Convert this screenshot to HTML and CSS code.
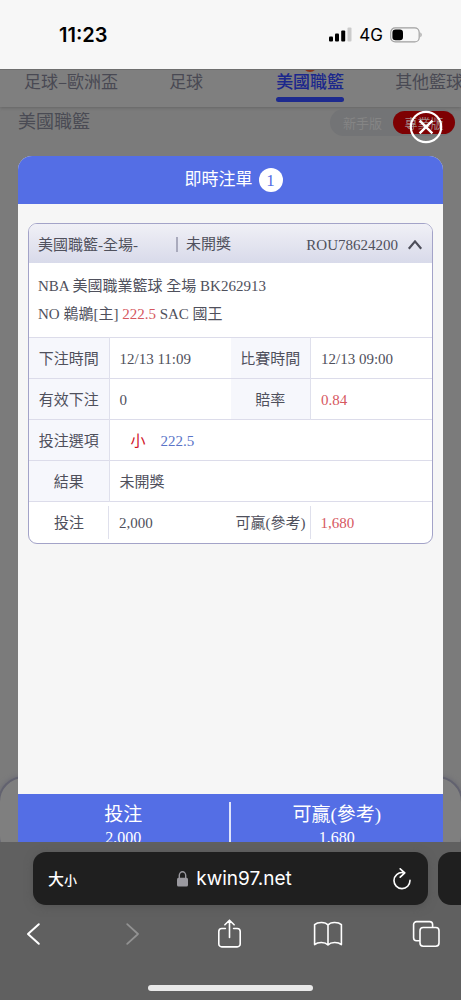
FILE: index.html
```html
<!DOCTYPE html>
<html lang="zh-Hant">
<head>
<meta charset="utf-8">
<meta name="viewport" content="width=device-width, initial-scale=1">
<title>即時注單</title>
<link rel="stylesheet" href="styles.css">
</head>
<body>
<header class="status">
  <span class="status-time">11:23</span>
  <div class="status-right">
    <svg class="signal" width="23" height="15" viewBox="0 0 23 15" aria-hidden="true">
      <rect x="0" y="9.5" width="4" height="5" rx="1"/>
      <rect x="6" y="6.5" width="4" height="8" rx="1"/>
      <rect x="12.2" y="3.5" width="4" height="11" rx="1"/>
      <rect x="18.5" y="0.5" width="4" height="14" rx="1" fill="#cbcbcb"/>
    </svg>
    <span class="status-net">4G</span>
    <svg width="33" height="16" viewBox="0 0 33 16" aria-hidden="true">
      <rect x="0.7" y="0.9" width="28.5" height="14" rx="4.5" fill="none" stroke="#a0a0a0" stroke-width="1.2"/>
      <rect x="2.4" y="2.6" width="10.6" height="10.6" rx="3.2"/>
      <path d="M30.4 5.6c1.7.7 1.7 4 0 4.7z" fill="#a0a0a0"/>
    </svg>
  </div>
</header>

<main class="page">
  <nav class="tabs">
    <button class="tab">足球–歐洲盃</button>
    <button class="tab">足球</button>
    <button class="tab tab-active">美國職籃<span class="tab-dot"></span></button>
    <button class="tab">其他籃球</button>
  </nav>
  <div class="league">
    <span class="league-name">美國職籃</span>
    <div class="mode">
      <button class="mode-item">新手版</button>
      <button class="mode-item mode-on">專業版</button>
    </div>
  </div>
  <div class="sheet"></div>

  <button class="close" aria-label="關閉">
    <svg width="34" height="34" viewBox="0 0 34 34" aria-hidden="true">
      <circle cx="17" cy="17" r="15.2" fill="none" stroke="#fff" stroke-width="2.2"/>
      <path d="M10.6 10.6l12.8 12.8M23.4 10.6L10.6 23.4" stroke="#fff" stroke-width="2.4"/>
    </svg>
  </button>

  <section class="modal">
    <h1 class="modal-head">即時注單<span class="count">1</span></h1>
    <div class="modal-body">
      <article class="card">
        <div class="card-head">
          <span class="card-title">美國職籃-全場-</span>
          <span class="card-state">未開獎</span>
          <span class="card-id">ROU78624200</span>
          <button class="fold" aria-label="收合">
            <svg width="16" height="12" viewBox="0 0 16 12" aria-hidden="true">
              <path d="M1.8 9.8L8 2.4l6.2 7.4" fill="none" stroke="#4d4e5a" stroke-width="2.2"/>
            </svg>
          </button>
        </div>
        <div class="card-info">
          <p>NBA 美國職業籃球 全場 BK262913</p>
          <p>NO 鵜鶘[主] <span class="red">222.5</span> SAC 國王</p>
        </div>
        <table class="bet">
          <colgroup><col class="c-label"><col><col class="c-label"><col></colgroup>
          <tbody>
            <tr><th>下注時間</th><td>12/13 11:09</td><th>比賽時間</th><td>12/13 09:00</td></tr>
            <tr><th>有效下注</th><td>0</td><th>賠率</th><td class="red">0.84</td></tr>
            <tr><th>投注選項</th><td colspan="3"><span class="pick">小</span><span class="blue">222.5</span></td></tr>
            <tr><th>結果</th><td colspan="3">未開獎</td></tr>
            <tr class="sum"><th>投注</th><td>2,000</td><th>可贏(參考)</th><td class="red">1,680</td></tr>
          </tbody>
        </table>
      </article>
    </div>
    <div class="totals">
      <div class="total"><span>投注</span><span class="amount">2,000</span></div>
      <div class="total"><span>可贏(參考)</span><span class="amount">1,680</span></div>
    </div>
  </section>
</main>

<footer class="browser">
  <div class="address-row">
    <div class="address">
      <button class="size" aria-label="文字大小"><span>大</span><span class="size-small">小</span></button>
      <div class="url">
        <svg width="11" height="16" viewBox="0 0 11 16" aria-hidden="true">
          <path d="M2.3 8V4.4a3.2 3.6 0 0 1 6.4 0V8" fill="none" stroke="#9a999f" stroke-width="1.4"/>
          <rect x="0" y="6.8" width="11" height="8.8" rx="1.5" fill="#9a999f"/>
        </svg>
        <span>kwin97.net</span>
      </div>
      <button class="icon" aria-label="重新載入">
        <svg width="20" height="22" viewBox="0 0 20 22" aria-hidden="true">
          <path d="M10.6 4.6A8 8 0 1 0 18 12.4M8.2 0.8l4.6 4-4.6 4.4" fill="none" stroke="#fff" stroke-width="1.6" stroke-linecap="round" stroke-linejoin="round"/>
        </svg>
      </button>
    </div>
    <div class="next-tab"></div>
  </div>
  <nav class="tools">
    <button class="icon" aria-label="上一頁">
      <svg width="28" height="28" viewBox="0 0 28 28"><path d="M18.8 4.2L8 14l10.8 9.8" fill="none" stroke="#fff" stroke-width="2" stroke-linecap="round" stroke-linejoin="round"/></svg>
    </button>
    <button class="icon" aria-label="下一頁">
      <svg width="28" height="28" viewBox="0 0 28 28"><path d="M9.2 4.2L20 14 9.2 23.8" fill="none" stroke="#929292" stroke-width="1.8" stroke-linecap="round" stroke-linejoin="round"/></svg>
    </button>
    <button class="icon" aria-label="分享">
      <svg width="28" height="30" viewBox="0 0 28 30"><path d="M10.4 9.5H6.8a3 3 0 0 0-3 3v12.4a3 3 0 0 0 3 3h15.4a3 3 0 0 0 3-3V12.5a3 3 0 0 0-3-3h-3.6M14.5 18.5V1.6M9.9 5.8l4.6-4.6 4.6 4.6" fill="none" stroke="#fff" stroke-width="1.6" stroke-linecap="round" stroke-linejoin="round"/></svg>
    </button>
    <button class="icon" aria-label="書籤">
      <svg width="30" height="28" viewBox="0 0 30 28"><path d="M15 5C12.500 1.800 5 1.600 1.600 4.600v20c3.400-2.900 10.400-2.900 13.400 0.400 3-3.300 10-3.300 13.400-0.400v-20C25 1.600 17.500 1.800 15 5zM15 5v20" fill="none" stroke="#fff" stroke-width="1.600" stroke-linejoin="round"/></svg>
    </button>
    <button class="icon" aria-label="分頁">
      <svg width="28" height="28" viewBox="0 0 28 28"><rect x="8" y="7.500" width="19" height="18.700" rx="3.200" fill="none" stroke="#fff" stroke-width="1.600"/><path d="M8 20.700H4.600a3 3 0 0 1-3-3V4.600a3 3 0 0 1 3-3h13a3 3 0 0 1 3 3v2.600" fill="none" stroke="#fff" stroke-width="1.600"/></svg>
    </button>
  </nav>
  <div class="home-bar"></div>
</footer>
</body>
</html>
```
FILE: styles.css
```css
* { box-sizing: border-box; }

body {
  margin: 0;
  height: 100vh;
  display: flex;
  flex-direction: column;
  overflow: hidden;
  background: #7b7b7b;
  color: #4f505c;
  font-family: "Liberation Serif", "Noto Sans CJK TC", serif;
  font-size: 15px;
  line-height: 20px;
}

button {
  margin: 0;
  padding: 0;
  border: 0;
  background: none;
  color: inherit;
  font: inherit;
  white-space: nowrap;
}

svg { display: block; }

/* Status bar */
.status {
  flex: none;
  display: flex;
  align-items: center;
  justify-content: space-between;
  height: 69px;
  padding: 0 38px 0 59px;
  background: #f7f7f7;
  color: #000;
  font-family: Inter, sans-serif;
}
.status-time { font-size: 20px; font-weight: 600; }
.status-right { display: flex; align-items: center; gap: 7px; }
.status-net { font-size: 17px; font-weight: 400; }

/* Page under the dialog */
.page {
  flex: 1;
  min-height: 0;
  position: relative;
  display: flex;
  flex-direction: column;
  overflow: hidden;
}
.tabs {
  flex: none;
  display: flex;
  gap: 51px;
  height: 38px;
  padding: 0 0 5px 24px;
  overflow: hidden;
  border-top: 1px solid #6f6f6f;
  background: #7f7f7f;
  box-shadow: 0 1px 3px #666;
  color: #494953;
  font-family: "Noto Sans CJK TC", sans-serif;
  font-size: 17px;
}
.tab {
  position: relative;
  flex: none;
  padding-bottom: 5px;
  border-bottom: 5px solid transparent;
}
.tab-active { margin-left: 22px; color: #1b278c; font-weight: 500; }
.tab-active::after {
  content: "";
  position: absolute;
  left: 0;
  right: 0;
  bottom: -5px;
  height: 5px;
  border-radius: 3px;
  background: #1d2a8e;
}
.tab-dot {
  position: absolute;
  top: -12px;
  left: 50%;
  width: 14px;
  height: 14px;
  margin-left: -7px;
  border-radius: 50%;
  background: #86341c;
}
.league {
  display: flex;
  align-items: flex-start;
  justify-content: space-between;
  padding: 2px 6px 0 18px;
}
.league-name { font-size: 18px; line-height: 26px; color: #4a4b54; }
.mode {
  display: flex;
  align-items: flex-start;
  height: 27px;
  padding: 2px 0 0 12px;
  border-radius: 14px;
  background: #737476;
  color: #858585;
  font-size: 13px;
}
.mode-item { width: 41px; height: 23px; padding-top: 3px; }
.mode-on {
  width: 62px;
  margin-left: 10px;
  border-radius: 12px;
  background: #7e0002;
  color: #a28787;
}
.sheet {
  position: absolute;
  left: -2px;
  right: -2px;
  bottom: -20px;
  height: 86px;
  border: 2px solid #62626f;
  border-radius: 26px;
  background: #7f7f7f;
  box-shadow: 0 0 5px #666672;
}

/* Dialog */
.close { position: absolute; top: 41px; right: 18px; }
.modal {
  position: absolute;
  inset: 87px 18px 0;
  display: flex;
  flex-direction: column;
  overflow: hidden;
  border-radius: 14px 14px 0 0;
  background: #f6f6f6;
}
.modal-head {
  flex: none;
  display: flex;
  align-items: center;
  justify-content: center;
  gap: 6px;
  height: 48px;
  margin: 0;
  padding-left: 6px;
  background: #546ee5;
  color: #fff;
  font-size: 17px;
  font-weight: 400;
}
.count {
  width: 24px;
  height: 24px;
  border-radius: 50%;
  background: #fff;
  color: #546ee5;
  line-height: 25px;
  text-align: center;
}
.modal-body { flex: 1; min-height: 0; padding: 19px 10px; }

/* Bet card */
.card {
  overflow: hidden;
  border: 1px solid #a3a3c8;
  border-radius: 9px;
  background: #fff;
}
.card-head {
  display: flex;
  align-items: center;
  height: 39px;
  padding: 2px 9px 0;
  background: linear-gradient(#f0f0f6, #d8daea);
}
.card-title { flex: 0 0 138px; }
.card-state {
  padding-left: 8px;
  border-left: 2px solid #a9aabc;
  line-height: 15px;
}
.card-id { margin-left: auto; }
.fold { margin-left: 9px; }
.card-info { padding: 9px; }
.card-info p { margin: 0; line-height: 28px; white-space: nowrap; }
.red { color: #d6585f; }
.blue { color: #5a74c8; }
.bet {
  width: 100%;
  border-collapse: collapse;
  table-layout: fixed;
}
.c-label { width: 80px; }
.bet th, .bet td {
  height: 41px;
  padding: 2px 0 0;
  border-top: 1px solid #dcdcea;
  white-space: nowrap;
}
.bet th {
  border-right: 1px solid #dfe0ec;
  background: #f6f7fc;
  font-weight: 400;
}
.bet td { padding-left: 10px; text-align: left; }
.pick { padding: 0 15px 0 11px; color: #d0111f; }
.bet .sum th {
  border-right: 0;
  background: linear-gradient(#dfe0ec, #dfe0ec) right center / 1px 33px no-repeat;
}

/* Totals bar */
.totals {
  flex: none;
  display: grid;
  grid-template-columns: 1fr 1fr;
  height: 48px;
  padding-top: 8px;
  overflow: hidden;
  background: #546ee5;
  color: #fff;
}
.total {
  display: flex;
  flex-direction: column;
  align-items: center;
  height: 60px;
  font-size: 19px;
  line-height: 26px;
}
.total:first-child { border-right: 2px solid #dfe4fb; }
.amount { font-size: 16px; line-height: 20px; }

/* Browser toolbar */
.browser {
  flex: none;
  display: flex;
  flex-direction: column;
  height: 158px;
  padding: 10px 0 9px;
  background: #606060;
  color: #fff;
}
.address-row { display: flex; gap: 10px; padding-left: 33px; }
.address {
  flex: 1;
  display: flex;
  align-items: center;
  justify-content: space-between;
  height: 53px;
  padding: 0 16px 0 15px;
  border-radius: 13px;
  background: #1f1f1f;
  box-shadow: 0 2px 8px #545454;
}
.next-tab {
  width: 23px;
  height: 53px;
  border-radius: 13px 0 0 13px;
  background: #1f1f1f;
}
.size {
  display: flex;
  align-items: baseline;
  font-family: "Noto Sans CJK TC", sans-serif;
  font-size: 16px;
  font-weight: 500;
}
.size-small { font-size: 13px; }
.url {
  display: flex;
  align-items: center;
  gap: 8px;
  font-family: Inter, sans-serif;
  font-size: 19px;
}
.tools {
  display: flex;
  align-items: center;
  justify-content: space-between;
  height: 58px;
  padding: 0 21px 0 20px;
}
.home-bar {
  width: 36%;
  height: 6px;
  margin: auto auto 0;
  border-radius: 3px;
  background: #e9e9e9;
}
```
